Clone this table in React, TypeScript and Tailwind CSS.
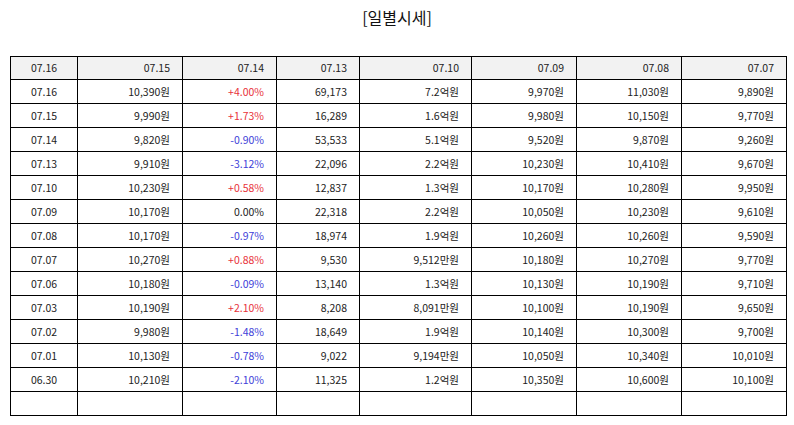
import React from "react";

type Row = [string, string, string, string, string, string, string, string];

const header: string[] = ["07.16", "07.15", "07.14", "07.13", "07.10", "07.09", "07.08", "07.07"];

// 날짜, 종가, 등락률, 거래량, 거래대금, 시가, 고가, 저가
const rows: Row[] = [
  ["07.16", "10,390원", "+4.00%", "69,173", "7.2억원", "9,970원", "11,030원", "9,890원"],
  ["07.15", "9,990원", "+1.73%", "16,289", "1.6억원", "9,980원", "10,150원", "9,770원"],
  ["07.14", "9,820원", "-0.90%", "53,533", "5.1억원", "9,520원", "9,870원", "9,260원"],
  ["07.13", "9,910원", "-3.12%", "22,096", "2.2억원", "10,230원", "10,410원", "9,670원"],
  ["07.10", "10,230원", "+0.58%", "12,837", "1.3억원", "10,170원", "10,280원", "9,950원"],
  ["07.09", "10,170원", "0.00%", "22,318", "2.2억원", "10,050원", "10,230원", "9,610원"],
  ["07.08", "10,170원", "-0.97%", "18,974", "1.9억원", "10,260원", "10,260원", "9,590원"],
  ["07.07", "10,270원", "+0.88%", "9,530", "9,512만원", "10,180원", "10,270원", "9,770원"],
  ["07.06", "10,180원", "-0.09%", "13,140", "1.3억원", "10,130원", "10,190원", "9,710원"],
  ["07.03", "10,190원", "+2.10%", "8,208", "8,091만원", "10,100원", "10,190원", "9,650원"],
  ["07.02", "9,980원", "-1.48%", "18,649", "1.9억원", "10,140원", "10,300원", "9,700원"],
  ["07.01", "10,130원", "-0.78%", "9,022", "9,194만원", "10,050원", "10,340원", "10,010원"],
  ["06.30", "10,210원", "-2.10%", "11,325", "1.2억원", "10,350원", "10,600원", "10,100원"],
];

const widths = ["w-[67px]", "w-[105px]", "w-[94px]", "w-[83px]", "w-[112px]", "w-[105px]", "w-[105px]", "w-[105px]"];

function rateColor(v: string) {
  if (v.startsWith("+")) return "text-[#e8323a]";
  if (v.startsWith("-")) return "text-[#4040d8]";
  return "text-[#222]";
}

export default function App() {
  return (
    <div className="w-[794px] h-[425px] bg-white pt-[6px] font-['Noto_Sans_CJK_KR','Noto_Sans',sans-serif]">
      <h1 className="text-center text-[16px] leading-[22px] text-[#111]">[일별시세]</h1>

      <table className="mt-[28px] ml-[10px] w-[776px] table-fixed border-collapse text-[10.5px] text-[#222]">
        <colgroup>
          {widths.map((w, i) => (
            <col key={i} className={w} />
          ))}
        </colgroup>
        <thead>
          <tr className="h-[23px] bg-[#f2f2f2]">
            {header.map((h, i) => (
              <td
                key={i}
                className={`border border-black font-normal ${i === 0 ? "text-center" : "text-right pr-[12px]"}`}
              >
                {h}
              </td>
            ))}
          </tr>
        </thead>
        <tbody>
          {rows.map((r) => (
            <tr key={r[0]} className="h-[24px]">
              {r.map((c, i) => (
                <td
                  key={i}
                  className={`border border-black ${i === 0 ? "text-center" : "text-right pr-[12px]"} ${i === 2 ? rateColor(c) : ""}`}
                >
                  {c}
                </td>
              ))}
            </tr>
          ))}
          {/* 빈 줄 */}
          <tr className="h-[24px]">
            {widths.map((_, i) => (
              <td key={i} className="border border-black" />
            ))}
          </tr>
        </tbody>
      </table>
    </div>
  );
}
